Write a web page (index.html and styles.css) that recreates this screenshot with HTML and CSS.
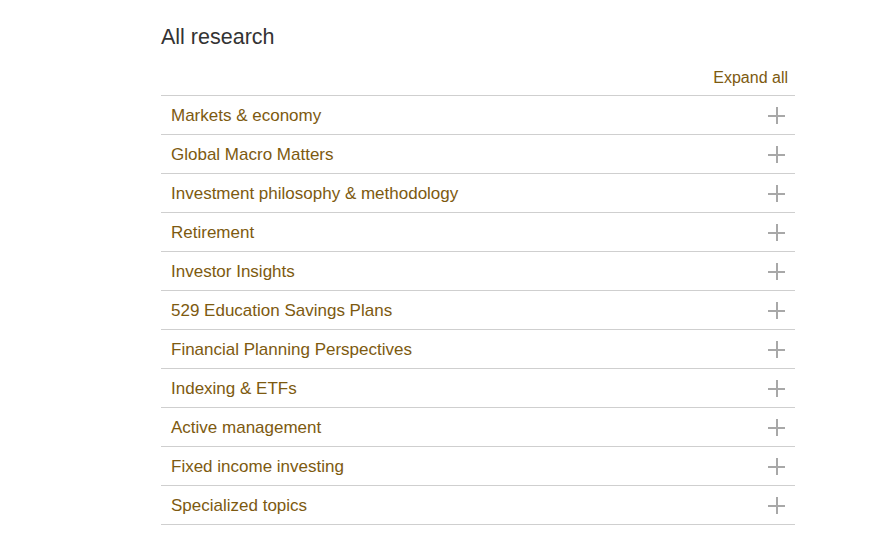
FILE: index.html
```html
<!DOCTYPE html>
<html lang="en">
<head>
<meta charset="utf-8">
<title>All research</title>
<link rel="stylesheet" href="styles.css">
</head>
<body>
<main class="research">
  <h1 class="title">All research</h1>
  <div class="toolbar"><a class="expand" href="#">Expand all</a></div>
  <ul class="accordion">
    <li class="row"><span class="label">Markets &amp; economy</span><span class="plus"></span></li>
    <li class="row"><span class="label">Global Macro Matters</span><span class="plus"></span></li>
    <li class="row"><span class="label">Investment philosophy &amp; methodology</span><span class="plus"></span></li>
    <li class="row"><span class="label">Retirement</span><span class="plus"></span></li>
    <li class="row"><span class="label">Investor Insights</span><span class="plus"></span></li>
    <li class="row"><span class="label">529 Education Savings Plans</span><span class="plus"></span></li>
    <li class="row"><span class="label">Financial Planning Perspectives</span><span class="plus"></span></li>
    <li class="row"><span class="label">Indexing &amp; ETFs</span><span class="plus"></span></li>
    <li class="row"><span class="label">Active management</span><span class="plus"></span></li>
    <li class="row"><span class="label">Fixed income investing</span><span class="plus"></span></li>
    <li class="row"><span class="label">Specialized topics</span><span class="plus"></span></li>
  </ul>
</main>
</body>
</html>
```

FILE: styles.css
```css
html, body {
  margin: 0;
  padding: 0;
  background: #fff;
  font-family: "Liberation Sans", Arial, sans-serif;
}
.research {
  width: 634px;
  margin-left: 161px;
  padding-top: 25px;
}
.title {
  margin: 0;
  font-size: 21.5px;
  font-weight: normal;
  color: #333;
  line-height: 24px;
}
.toolbar {
  display: flex;
  justify-content: flex-end;
  padding-right: 7px;
  padding-top: 19px;
  height: 27px;
}
.expand {
  font-size: 16px;
  line-height: 20px;
  color: #7d5a10;
  text-decoration: none;
}
.accordion {
  list-style: none;
  margin: 0;
  padding: 0;
  border-bottom: 1px solid #cfcfcf;
}
.row {
  display: flex;
  align-items: center;
  justify-content: space-between;
  height: 38px;
  border-top: 1px solid #cfcfcf;
  padding: 0 10px;
}
.label {
  font-size: 17px;
  line-height: 20px;
  padding-top: 2px;
  color: #7d5a10;
}
.plus {
  position: relative;
  width: 17px;
  height: 17px;
}
.plus::before, .plus::after {
  content: "";
  position: absolute;
  background: #a8a8a8;
}
.plus::before {
  left: 0;
  right: 0;
  top: 8px;
  height: 2px;
}
.plus::after {
  top: 0;
  bottom: 0;
  left: 8px;
  width: 2px;
}
```
